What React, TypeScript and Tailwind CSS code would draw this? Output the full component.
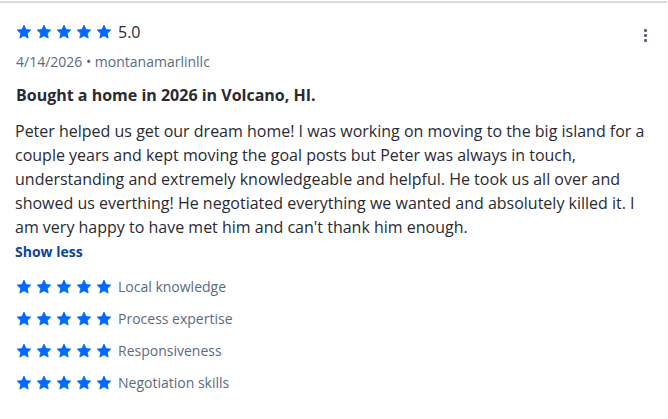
const Star = ({ size = 16 }: { size?: number }) => (
  <svg width={size} height={size} viewBox="0 0 24 24" fill="#006aff" aria-hidden>
    <path d="M12 1.6l3.1 6.6 7.1.9-5.2 4.9 1.3 7.1L12 17.7l-6.3 3.4 1.3-7.1-5.2-4.9 7.1-.9z" strokeLinejoin="round" stroke="#006aff" strokeWidth="1.2" />
  </svg>
);

const Stars = ({ size = 16 }: { size?: number }) => (
  <div className="flex gap-1">
    {[0, 1, 2, 3, 4].map((i) => (
      <Star key={i} size={size} />
    ))}
  </div>
);

const categories = ["Local knowledge", "Process expertise", "Responsiveness", "Negotiation skills"];

export default function App() {
  return (
    <div
      className="w-[668px] h-[419px] bg-white text-[#2a2a33]"
      style={{ fontFamily: '"Open Sans", sans-serif' }}
    >
      <div className="border-t-2 border-[#d9d9d9] mt-[1px] w-[667px] px-4 pt-[19px] relative">
        <button className="absolute right-[16px] top-[22px] flex flex-col gap-[2px] p-1">
          <span className="w-[3px] h-[3px] bg-[#54647a] rounded-[1px]" />
          <span className="w-[3px] h-[3px] bg-[#54647a] rounded-[1px]" />
          <span className="w-[3px] h-[3px] bg-[#54647a] rounded-[1px]" />
        </button>
        <div className="flex items-center gap-[6px] h-[20px]">
          <Stars />
          <span className="text-base">5.0</span>
        </div>
        <div className="mt-[10px] text-sm text-[#596b82]">4/14/2026 • montanamarlinllc</div>
        <h3 className="mt-[11px] text-base font-bold">Bought a home in 2026 in Volcano, HI.</h3>
        <p className="mt-[12px] text-base leading-6 -ml-px">
          Peter helped us get our dream home! I was working on moving to the big island for a couple years and kept
          moving the goal posts but Peter was always in touch, understanding and extremely knowledgeable and helpful. He
          took us all over and showed us everthing! He negotiated everything we wanted and absolutely killed it. I am
          very happy to have met him and can't thank him enough.
        </p>
        <button className="text-sm font-bold text-[#0d4599] leading-6 -ml-px">Show less</button>
        <div className="mt-[13px] flex flex-col gap-[12px]">
          {categories.map((c) => (
            <div key={c} className="flex items-center gap-[6px] h-[20px]">
              <Stars />
              <span className="text-sm text-[#596b82]">{c}</span>
            </div>
          ))}
        </div>
      </div>
    </div>
  );
}
